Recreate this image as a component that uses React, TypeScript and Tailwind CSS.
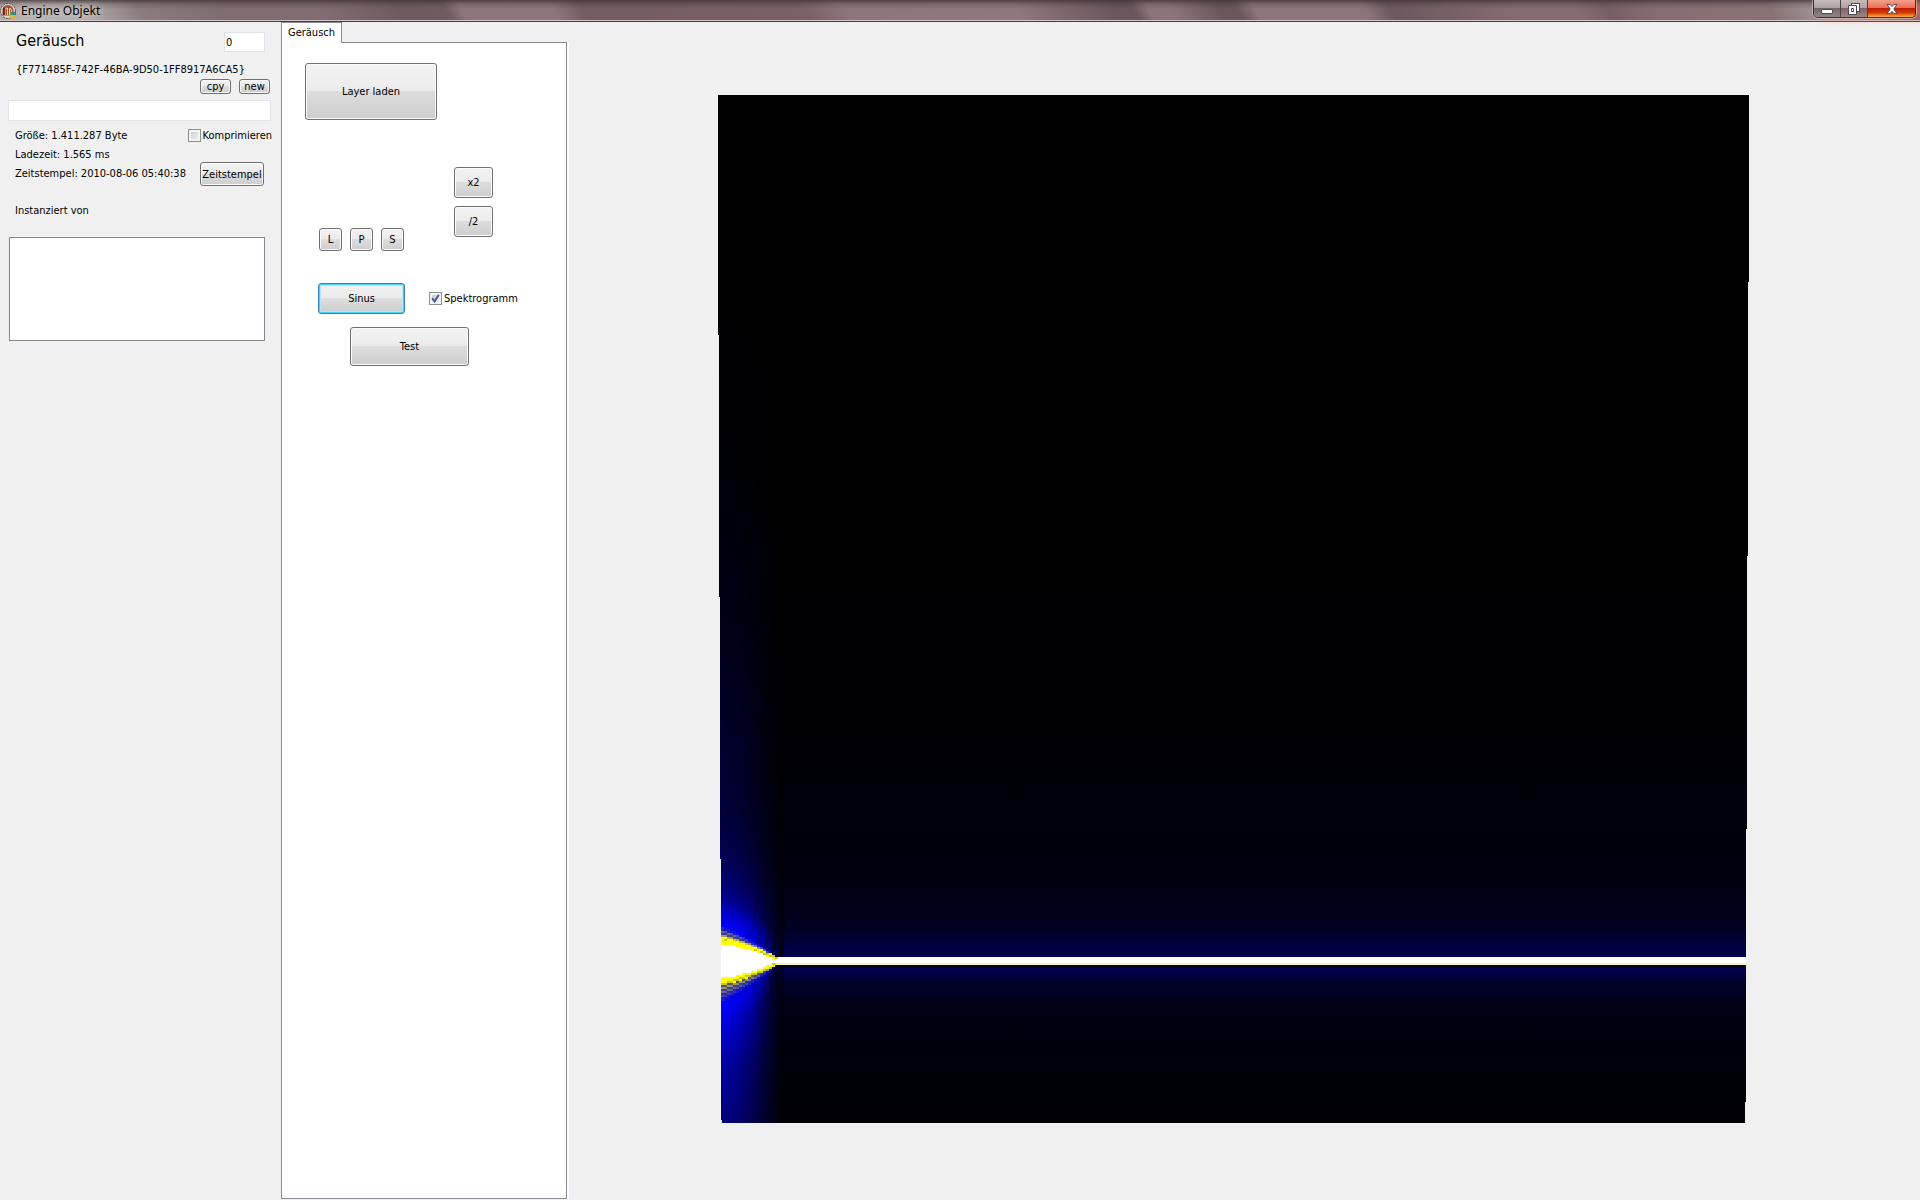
import { useState } from 'react';
import type { ButtonHTMLAttributes } from 'react';
import clsx from 'clsx';

type WinButtonProps = ButtonHTMLAttributes<HTMLButtonElement> & { focused?: boolean };

function WinButton({ className, focused, ...props }: WinButtonProps) {
  return (
    <button
      type="button"
      className={clsx(
        'flex items-center justify-center rounded-[3px] border whitespace-nowrap',
        'bg-[linear-gradient(#f3f3f3,#ebebeb_48%,#dddddd_50%,#cdcdcd)]',
        focused
          ? 'border-[#3c7fb1] shadow-[inset_0_0_0_1px_#48d0f8,inset_0_0_0_2px_#b5e6f4]'
          : 'border-[#707070] shadow-[inset_0_0_0_1px_#fafafa]',
        className
      )}
      {...props}
    />
  );
}

function CheckBox({ label, defaultChecked = false }: { label: string; defaultChecked?: boolean }) {
  const [checked, setChecked] = useState(defaultChecked);

  return (
    <label className="flex items-center gap-0.5 whitespace-nowrap">
      <span className="relative size-[13px] shrink-0">
        <input
          type="checkbox"
          checked={checked}
          onChange={(e) => setChecked(e.target.checked)}
          className="block size-[13px] appearance-none border border-[#8e8f8f] bg-[linear-gradient(135deg,#c4c8cc,#f6f6f6)] shadow-[inset_0_0_0_2px_#f4f4f4]"
        />
        {checked && (
          <svg viewBox="0 0 13 13" className="pointer-events-none absolute inset-0 size-[13px]">
            <path d="M3.2 6.2 L5.6 9.4 L9.8 2.8" fill="none" stroke="#4a5f97" strokeWidth="2" />
          </svg>
        )}
      </span>
      {label}
    </label>
  );
}

function AppIcon() {
  return (
    <svg viewBox="0 0 16 16" className="size-4">
      <circle cx="8" cy="8" r="7.5" fill="#d9d6d4" stroke="#4e4644" strokeWidth="1" strokeDasharray="2 1" />
      <path d="M2.5 12.5 V6 Q4 2 8 2 Q12.8 2.5 13.5 7 V12.5 Z" fill="#a4502f" />
      <path d="M5 12 V6.5 Q6 4.5 7.5 5 V12 M9.5 12 V5.5 Q11.5 5 11.5 8 V12" fill="none" stroke="#ecd3c4" strokeWidth="1" />
      <path d="M3 4.5 H5 V12 H3 Z" fill="#6c2a22" />
      <path d="M10 9 H13 V12 H10 Z" fill="#4c9a4a" />
      <path d="M13 9 H16 V12 H13 Z" fill="#3f74b8" />
      <path d="M10 12 H16 V15.5 H10 Z" fill="#d8b63a" />
    </svg>
  );
}

function TitleBar() {
  return (
    <header className="flex h-[22px] items-start justify-between border-b border-[#4a3d42] bg-[linear-gradient(#3d2f33c0,#3d2f3340_4px,transparent_9px,transparent_20px,#cfc4c7_20px),linear-gradient(60deg,#b5afae_0%,#b5aeae_4.5%,#8b7c7e_7.5%,#7e6c6f_12%,#816c71_17%,#6f5a60_21%,#705b60_23.4%,#8d767b_24.2%,#8d767b_29%,#725c60_30.5%,#7b6166_42%,#8c757b_44%,#8e777d_53%,#6a565c_58%,#6a565c_59%,#8b757a_59.8%,#8b757a_61%,#6a565b_63.5%,#6a565b_64.4%,#8c757b_65.3%,#8c757b_71%,#6a585e_72.3%,#866c70_79%,#866c70_82%,#765f64_83.6%,#866d71_86%,#8a7375_92%,#a59c9b_95%,#7b6568_100%)] pr-1">
      <div className="flex items-center gap-[5px] pt-[3px]">
        <AppIcon />
        <h1 className="font-['Noto_Sans',sans-serif] text-[12px] leading-4 text-black [text-shadow:0_0_6px_#ffffffc0]">
          Engine Objekt
        </h1>
      </div>
      <div className="flex h-[18px] overflow-hidden rounded-b-[5px] border border-t-0 border-[#3d3034] shadow-[0_0_0_1px_#d6cccc90,8px_0_10px_#ff704890]">
        <button
          type="button"
          aria-label="Minimieren"
          className="flex w-[27px] items-center justify-center border-r border-[#4d4145] bg-[linear-gradient(#c4bcbc,#aea3a4_45%,#746467_50%,#92868a)]"
        >
          <svg viewBox="0 0 12 12" className="size-3">
            <rect x="0.5" y="6.5" width="11" height="4" rx="0.5" fill="#fff" stroke="#4b4a58" />
          </svg>
        </button>
        <button
          type="button"
          aria-label="Wiederherstellen"
          className="flex w-[27px] items-center justify-center border-r border-[#6d3028] bg-[linear-gradient(#c4bcbc,#b5a09e_45%,#7e6465_50%,#9f8788)]"
        >
          <svg viewBox="0 0 12 12" className="size-3" fill="#fff" stroke="#4b4a58">
            <rect x="3.5" y="0.5" width="8" height="8" />
            <path d="M0.5 2.5 H8.5 V11.5 H0.5 Z M3.5 5.5 V8.5 H5.5 V5.5 Z" fillRule="evenodd" />
          </svg>
        </button>
        <button
          type="button"
          aria-label="Schließen"
          className="flex w-[47px] items-center justify-center bg-[linear-gradient(#f5a08c,#ea6f55_45%,#c01c04_50%,#d33a08_75%,#ffb030)]"
        >
          <svg viewBox="0 0 12 12" className="size-3">
            <path
              d="M1 1.5 H4.2 L6 3.6 L7.8 1.5 H11 L7.8 6 L11 10.5 H7.8 L6 8.4 L4.2 10.5 H1 L4.2 6 Z"
              fill="#fff"
              stroke="#5b4650"
            />
          </svg>
        </button>
      </div>
    </header>
  );
}

function Sidebar() {
  return (
    <aside className="w-[281px] shrink-0 pl-2">
      <div className="flex h-[38px] items-start justify-between pt-[10px] pr-4 pl-2">
        <label htmlFor="object-index" className="text-[16px] leading-[17px]">
          Geräusch
        </label>
        <input
          id="object-index"
          defaultValue="0"
          className="h-5 w-[41px] border border-[#e2e3ea] bg-white px-px"
        />
      </div>
      <p className="pl-2 leading-[19px]">{'{F771485F-742F-46BA-9D50-1FF8917A6CA5}'}</p>
      <div className="flex justify-end gap-2 pr-[11px]">
        <WinButton className="h-[15px] w-[31px]">cpy</WinButton>
        <WinButton className="h-[15px] w-[31px]">new</WinButton>
      </div>
      <input
        aria-label="Name"
        className="mt-[6px] block h-[21px] w-[263px] border border-[#e2e3ea] bg-white px-px"
      />
      <div className="mt-[5px] flex justify-between pl-[7px] leading-[19px]">
        <div>
          <p>Größe: 1.411.287 Byte</p>
          <p>Ladezeit: 1.565 ms</p>
          <p>Zeitstempel: 2010-08-06 05:40:38</p>
        </div>
        <div className="flex w-[81px] flex-col items-start">
          <div className="self-end pr-[9px]">
            <CheckBox label="Komprimieren" />
          </div>
          <WinButton className="mt-[17px] h-6 w-16">Zeitstempel</WinButton>
        </div>
      </div>
      <label htmlFor="instances" className="block pt-[15px] pl-[7px] leading-[19px]">
        Instanziert von
      </label>
      <select
        id="instances"
        size={6}
        className="mt-[17px] ml-px block h-[104px] w-64 appearance-none border border-[#828790] bg-white"
      />
    </aside>
  );
}

function SoundPanel() {
  return (
    <section className="mb-px flex w-[288px] shrink-0 flex-col">
      <div role="tablist" className="relative z-10 flex">
        <button
          type="button"
          role="tab"
          aria-selected="true"
          className="-mb-px h-[21px] w-[61px] border border-b-0 border-[#898c95] bg-white"
        >
          Geräusch
        </button>
      </div>
      <div role="tabpanel" className="flex-1 border-r-2 border-white">
        <div className="flex h-full flex-col items-start border border-[#898c95] bg-white">
          <WinButton className="mt-5 ml-[23px] h-[57px] w-[132px]">Layer laden</WinButton>
          <div className="mt-[47px] ml-[37px] flex items-start gap-[50px]">
            <div className="flex gap-2 pt-[61px]">
              <WinButton className="size-[23px]">L</WinButton>
              <WinButton className="size-[23px]">P</WinButton>
              <WinButton className="size-[23px]">S</WinButton>
            </div>
            <div className="flex flex-col gap-2">
              <WinButton className="h-[31px] w-[39px]">x2</WinButton>
              <WinButton className="h-[31px] w-[39px]">/2</WinButton>
            </div>
          </div>
          <div className="mt-8 ml-9 flex items-center gap-6">
            <WinButton focused className="h-[31px] w-[87px]">
              Sinus
            </WinButton>
            <CheckBox label="Spektrogramm" defaultChecked />
          </div>
          <WinButton className="mt-[13px] ml-[68px] h-[39px] w-[119px]">Test</WinButton>
        </div>
      </div>
    </section>
  );
}

const LINE_Y = 866;

// The attack of the tone: a wide burst that narrows into the steady line
function burstCells() {
  const cells: { x: number; y: number; fill: string }[] = [];
  for (let col = 0; col < 19; col++) {
    const t = col / 19;
    const shape = 1 - Math.pow(t, 1.4);
    for (let y = 824; y < 912; y += 2) {
      const d = Math.abs(y + 1 - LINE_Y);
      const below = y > LINE_Y;
      const stripe = ((y >> 1) + (col >> 1)) % 2 === 0;
      const white = 17 * shape;
      const yellow = white + 7 * (1 - t * 0.6);
      const fringe = yellow + (below ? 18 : 11) * Math.pow(1 - t, 1.2);
      let fill = '';
      if (d < white) fill = '#ffffff';
      else if (d < yellow) fill = d > yellow - 3 && stripe ? '#c8c820' : '#ffff00';
      else if (d < fringe) {
        const k = (fringe - d) / (fringe - yellow);
        const g = Math.round((stripe ? 180 : 90) * k);
        fill = `rgb(${g},${g},${Math.round(230 - 140 * k)})`;
      }
      if (fill) cells.push({ x: 3 + col * 3, y, fill });
    }
  }
  return cells;
}

const BURST = burstCells();

function Spectrogram() {
  return (
    <svg viewBox="0 0 1031 1028" className="block w-full" role="img" aria-label="Spektrogramm">
      <defs>
        <clipPath id="plot">
          <path d="M0 0 H1031 V187 H1030 V461 H1029 V734 H1028 V1007 H1027 V1028 H4 V1025 H3 V764 H2 V502 H1 V240 H0 Z" />
        </clipPath>
        <linearGradient id="floor" x1="0" y1="0" x2="0" y2="1028" gradientUnits="userSpaceOnUse">
          <stop offset="0" stopColor="#000000" />
          <stop offset="0.45" stopColor="#000001" />
          <stop offset="0.66" stopColor="#000007" />
          <stop offset="0.76" stopColor="#00000f" />
          <stop offset="0.81" stopColor="#000022" />
          <stop offset="0.838" stopColor="#000050" />
          <stop offset="0.848" stopColor="#000058" />
          <stop offset="0.862" stopColor="#00002c" />
          <stop offset="0.89" stopColor="#000014" />
          <stop offset="0.94" stopColor="#000009" />
          <stop offset="1" stopColor="#000006" />
        </linearGradient>
        <linearGradient id="attack" x1="0" y1="0" x2="0" y2="1028" gradientUnits="userSpaceOnUse">
          <stop offset="0.2" stopColor="#000001" />
          <stop offset="0.4" stopColor="#00000a" />
          <stop offset="0.52" stopColor="#000018" />
          <stop offset="0.62" stopColor="#00002a" />
          <stop offset="0.7" stopColor="#00003c" />
          <stop offset="0.745" stopColor="#000058" />
          <stop offset="0.775" stopColor="#000084" />
          <stop offset="0.8" stopColor="#0000c8" />
          <stop offset="0.815" stopColor="#0000ff" />
          <stop offset="0.885" stopColor="#0000ff" />
          <stop offset="0.91" stopColor="#0000d8" />
          <stop offset="0.94" stopColor="#0000a8" />
          <stop offset="1" stopColor="#000080" />
        </linearGradient>
        <linearGradient id="fade" x1="3" y1="0" x2="66" y2="0" gradientUnits="userSpaceOnUse">
          <stop offset="0" stopColor="#fff" />
          <stop offset="0.25" stopColor="#ddd" />
          <stop offset="0.5" stopColor="#999" />
          <stop offset="0.75" stopColor="#444" />
          <stop offset="1" stopColor="#000" />
        </linearGradient>
        <radialGradient id="halo" cx="3" cy="866" r="58" gradientUnits="userSpaceOnUse">
          <stop offset="0" stopColor="#0000ff" />
          <stop offset="0.6" stopColor="#0000ff" stopOpacity="0.7" />
          <stop offset="1" stopColor="#0000ff" stopOpacity="0" />
        </radialGradient>
        <mask id="attack-mask" maskUnits="userSpaceOnUse" x="0" y="0" width="70" height="1028">
          <rect width="66" height="1028" fill="url(#fade)" />
        </mask>
      </defs>
      <g clipPath="url(#plot)">
        <rect width="1031" height="1028" fill="url(#floor)" />
        <rect width="66" height="1028" fill="#000" fillOpacity="0.6" />
        <rect width="66" height="1028" fill="url(#attack)" mask="url(#attack-mask)" />
        <rect y="800" width="66" height="132" fill="url(#halo)" />
        {/* interference fringes */}
        <g fill="none" stroke="#000014">
          <path d="M62 862 Q66 840 65 815" strokeWidth="4" strokeOpacity="0.9" />
          <path d="M54 858 Q62 825 59 770" strokeWidth="3" strokeOpacity="0.6" />
          <path d="M47 854 Q58 810 52 750" strokeWidth="2" strokeOpacity="0.4" />
          <path d="M40 848 Q53 800 44 738" strokeWidth="2" strokeOpacity="0.25" />
          <path d="M32 842 Q47 790 34 724" strokeWidth="2" strokeOpacity="0.15" />
          <path d="M56 874 Q63 900 63 930" strokeWidth="4" strokeOpacity="0.8" />
          <path d="M50 876 Q59 910 58 960" strokeWidth="3" strokeOpacity="0.5" />
          <path d="M43 880 Q55 915 52 975" strokeWidth="2" strokeOpacity="0.35" />
          <path d="M36 884 Q50 925 45 990" strokeWidth="2" strokeOpacity="0.2" />
        </g>
        <rect x="50" y="862" width="981" height="6" fill="#ffffff" />
        <rect x="54" y="868" width="977" height="2" fill="#f4f4b4" />
        <rect x="60" y="870" width="971" height="2" fill="#000004" />
        {BURST.map((c) => (
          <rect key={`${c.x}-${c.y}`} x={c.x} y={c.y} width="3" height="2" fill={c.fill} shapeRendering="crispEdges" />
        ))}
      </g>
    </svg>
  );
}

export default function App() {
  return (
    <div className="flex min-h-screen flex-col bg-[#f0f0f0] font-['DejaVu_Sans_Condensed','DejaVu_Sans',sans-serif] text-[11px] leading-[14px] text-black">
      <TitleBar />
      <div className="flex flex-1">
        <Sidebar />
        <SoundPanel />
        <main className="min-w-0 flex-1 pt-[73px] pr-[171px] pl-[149px]">
          <Spectrogram />
        </main>
      </div>
    </div>
  );
}
